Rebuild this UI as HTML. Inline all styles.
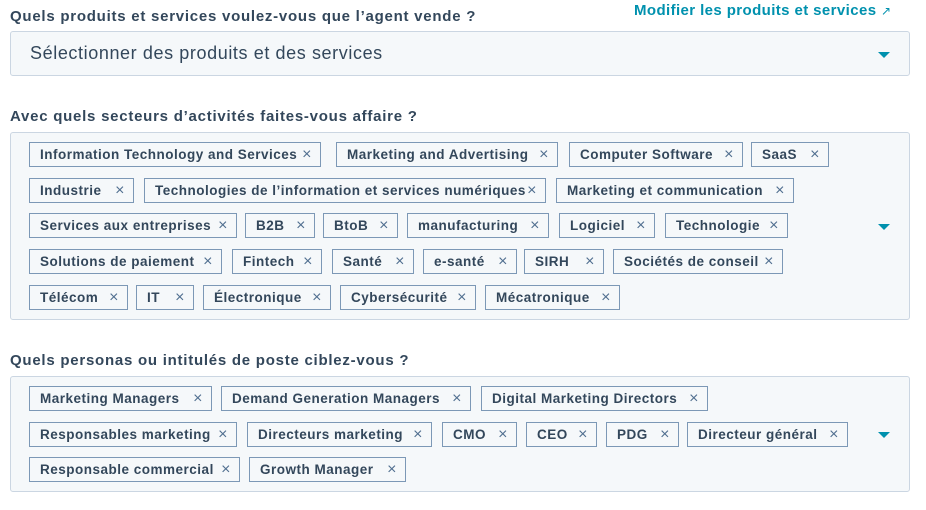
<!DOCTYPE html><html><head><style>
body{margin:0;width:926px;height:510px;background:#fff;font-family:"Liberation Sans",sans-serif;color:#33475b;position:relative;overflow:hidden}
.a{position:absolute}
.lbl{font-weight:bold;font-size:15px;white-space:nowrap;letter-spacing:0.75px}
.box{position:absolute;left:10px;width:898px;background:#f5f8fa;border:1px solid #cbd6e2;border-radius:3px}
.t{position:absolute;border:1px solid #7c98b6;background:#f5f8fa;box-sizing:border-box;height:25px;font-weight:bold;font-size:13.5px;line-height:23px;padding-left:10px;white-space:nowrap;overflow:hidden;letter-spacing:0.5px}
.t:after{content:"×";position:absolute;right:8px;top:0;font-weight:normal;font-size:16px;color:#516f90}
.car{position:absolute;width:0;height:0;border-left:6px solid transparent;border-right:6px solid transparent;border-top:6px solid #0091ae}
</style></head><body>
<div class="a lbl" style="left:10px;top:8px">Quels produits et services voulez-vous que l’agent vende ?</div>
<div class="a lbl" style="left:634px;top:2px;color:#0091ae;letter-spacing:0.4px">Modifier les produits et services <span style="font-size:12px;font-weight:normal">↗</span></div>
<div class="box" style="top:31px;height:43px"><div class="a" style="left:19px;top:11px;font-size:18px;letter-spacing:0.6px">Sélectionner des produits et des services</div><div class="car" style="left:867px;top:20px"></div></div>
<div class="a lbl" style="left:10px;top:108px">Avec quels secteurs d’activités faites-vous affaire ?</div>
<div class="box" style="top:132px;height:186px"><div class="car" style="left:867px;top:91px"></div></div>
<div class="a lbl" style="left:10px;top:352px">Quels personas ou intitulés de poste ciblez-vous ?</div>
<div class="box" style="top:376px;height:114px"><div class="car" style="left:867px;top:55px"></div></div>

<div class="t" style="left:29px;top:142px;width:292px">Information Technology and Services</div>
<div class="t" style="left:336px;top:142px;width:222px">Marketing and Advertising</div>
<div class="t" style="left:569px;top:142px;width:174px">Computer Software</div>
<div class="t" style="left:751px;top:142px;width:78px">SaaS</div>

<div class="t" style="left:29px;top:178px;width:105px">Industrie</div>
<div class="t" style="left:144px;top:178px;width:402px">Technologies de l’information et services numériques</div>
<div class="t" style="left:556px;top:178px;width:238px">Marketing et communication</div>

<div class="t" style="left:29px;top:213px;width:208px">Services aux entreprises</div>
<div class="t" style="left:245px;top:213px;width:70px">B2B</div>
<div class="t" style="left:323px;top:213px;width:75px">BtoB</div>
<div class="t" style="left:407px;top:213px;width:142px">manufacturing</div>
<div class="t" style="left:559px;top:213px;width:96px">Logiciel</div>
<div class="t" style="left:665px;top:213px;width:123px">Technologie</div>

<div class="t" style="left:29px;top:249px;width:193px">Solutions de paiement</div>
<div class="t" style="left:232px;top:249px;width:90px">Fintech</div>
<div class="t" style="left:332px;top:249px;width:82px">Santé</div>
<div class="t" style="left:423px;top:249px;width:94px">e-santé</div>
<div class="t" style="left:524px;top:249px;width:80px">SIRH</div>
<div class="t" style="left:613px;top:249px;width:170px">Sociétés de conseil</div>

<div class="t" style="left:29px;top:285px;width:99px">Télécom</div>
<div class="t" style="left:136px;top:285px;width:58px">IT</div>
<div class="t" style="left:203px;top:285px;width:128px">Électronique</div>
<div class="t" style="left:340px;top:285px;width:136px">Cybersécurité</div>
<div class="t" style="left:485px;top:285px;width:135px">Mécatronique</div>

<div class="t" style="left:29px;top:386px;width:183px">Marketing Managers</div>
<div class="t" style="left:221px;top:386px;width:250px">Demand Generation Managers</div>
<div class="t" style="left:481px;top:386px;width:227px">Digital Marketing Directors</div>

<div class="t" style="left:29px;top:422px;width:208px">Responsables marketing</div>
<div class="t" style="left:247px;top:422px;width:185px">Directeurs marketing</div>
<div class="t" style="left:442px;top:422px;width:75px">CMO</div>
<div class="t" style="left:526px;top:422px;width:71px">CEO</div>
<div class="t" style="left:606px;top:422px;width:73px">PDG</div>
<div class="t" style="left:687px;top:422px;width:161px">Directeur général</div>

<div class="t" style="left:29px;top:457px;width:211px">Responsable commercial</div>
<div class="t" style="left:249px;top:457px;width:157px">Growth Manager</div>
</body></html>
